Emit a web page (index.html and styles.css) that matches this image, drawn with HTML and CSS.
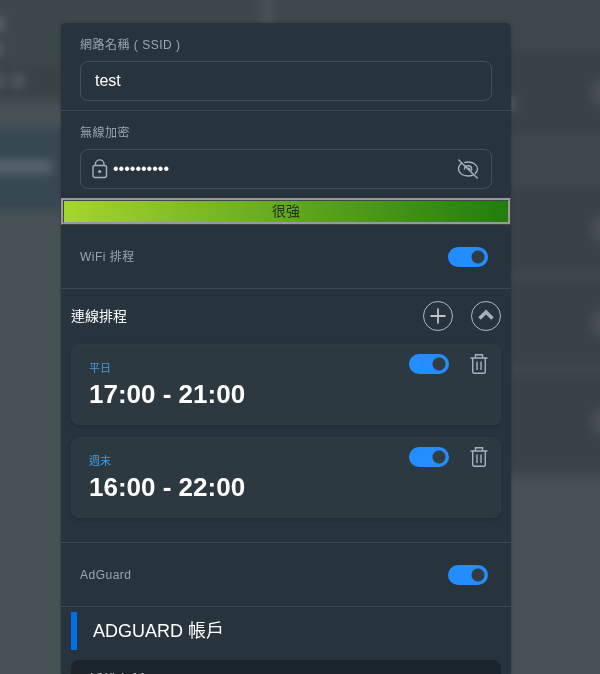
FILE: index.html
```
<!DOCTYPE html>
<html lang="zh-Hant">
<head>
<meta charset="utf-8">
<meta name="viewport" content="width=device-width, initial-scale=1">
<title>WiFi</title>
<link rel="stylesheet" href="styles.css">
</head>
<body>
<div class="backdrop" aria-hidden="true">
  <div class="side">
    <div class="tile"><i class="blob b1"></i><i class="blob b2"></i><div class="tile-foot"><i class="blob b3"></i><i class="blob b3"></i></div></div>
    <div class="tile tile-active"><i class="blob b4"></i></div>
  </div>
  <div class="list">
    <div class="line"><i class="blob name"></i><i class="blob knob"></i></div>
    <div class="line"></div>
    <div class="line"><i class="blob knob"></i></div>
    <div class="line"><i class="blob knob"></i></div>
    <div class="line"><i class="blob knob"></i></div>
  </div>
</div>

<main class="panel">
  <section class="field">
    <label class="label" for="ssid">網路名稱 ( SSID )</label>
    <div class="box"><input class="input" id="ssid" type="text" value="test"></div>
  </section>
  <section class="field last">
    <label class="label" for="pass">無線加密</label>
    <div class="box secret">
      <svg class="lock" width="16" height="20" viewBox="0 0 16 20"><rect x="1" y="6.500" width="13.500" height="12" rx="2"/><path d="M3.400 6.500V5.200a4.300 4.300 0 0 1 8.600 0v1.300"/><circle class="dot" cx="7.700" cy="12.500" r="1.600"/></svg>
      <input class="input" id="pass" type="password" value="password12">
      <button class="icon-btn" type="button" aria-label="顯示密碼">
        <svg width="22" height="22" viewBox="0 0 22 22"><path d="M5 5.200C2.800 6.500 1.500 8.600 1.500 11c0 4 4.300 7 9.500 7 2 0 3.900-.4 5.400-1.200M7.300 4.500A13 13 0 0 1 11 4c5.200 0 9.500 3 9.500 7 0 1.900-1 3.600-2.600 4.900"/><path d="M7.500 11.500C7.500 9.400 9 7.800 11 7.800s3.600 1.500 3.600 3.400q0 .8-.4 1.500M10.300 10.600q1-.8 1.900 0t.5 1.800"/><path d="M1.300 1.500 20.700 20.500"/></svg>
      </button>
    </div>
  </section>
  <div class="strength">很強</div>
  <section class="row">
    <label class="label" for="sched">WiFi 排程</label>
    <input class="switch" id="sched" type="checkbox" role="switch" checked>
  </section>
  <section class="schedule">
    <header class="head">
      <h2 class="subtitle">連線排程</h2>
      <button class="round" type="button" aria-label="新增"><svg class="plus" width="16" height="16" viewBox="0 0 16 16"><path d="M8 .5v15M.5 8h15"/></svg></button>
      <button class="round" type="button" aria-label="收合"><svg class="bold" width="16" height="16" viewBox="0 0 16 16"><path d="M1.500 10.500 8 4l6.500 6.500"/></svg></button>
    </header>
    <article class="card">
      <div class="when"><label class="day" for="d1">平日</label><strong class="time">17:00 - 21:00</strong></div>
      <input class="switch" id="d1" type="checkbox" role="switch" checked>
      <button class="icon-btn" type="button" aria-label="刪除"><svg width="18" height="20" viewBox="0 0 18 20"><path d="M.5 4h17M5.500 4V.7h7V4M2.700 4v13.500q0 1.800 1.800 1.800h9q1.800 0 1.800-1.800V4M7 7.500V16M11 7.500V16"/></svg></button>
    </article>
    <article class="card">
      <div class="when"><label class="day" for="d2">週末</label><strong class="time">16:00 - 22:00</strong></div>
      <input class="switch" id="d2" type="checkbox" role="switch" checked>
      <button class="icon-btn" type="button" aria-label="刪除"><svg width="18" height="20" viewBox="0 0 18 20"><path d="M.5 4h17M5.500 4V.7h7V4M2.700 4v13.500q0 1.800 1.800 1.800h9q1.800 0 1.800-1.800V4M7 7.500V16M11 7.500V16"/></svg></button>
    </article>
  </section>
  <section class="row">
    <label class="label" for="adg">AdGuard</label>
    <input class="switch" id="adg" type="checkbox" role="switch" checked>
  </section>
  <section class="account">
    <h2 class="title">ADGUARD 帳戶</h2>
    <div class="account-card">授權名稱</div>
  </section>
</main>
</body>
</html>
```
FILE: styles.css
```
* { box-sizing: border-box; }

body {
  margin: 0;
  height: 100vh;
  overflow: hidden;
  padding: 23px 89px 0 61px;
  background: #475257;
  color: #fff;
  font-family: "Liberation Sans", "Noto Sans CJK TC", sans-serif;
}

/* Blurred page behind the panel */
.backdrop {
  position: fixed;
  inset: -20px -20px 0;
  z-index: -1;
  display: grid;
  grid-template-columns: 280px 1fr;
  gap: 14px;
  align-items: start;
  filter: blur(5px);
}
.side { display: grid; gap: 26px; }
.tile { height: 122px; padding: 38px 0 0 12px; background: #3c474b; }
.tile-foot { display: flex; gap: 8px; margin: 10px 0 0 -12px; padding: 8px 12px; background: #394347; }
.tile-active { height: 82px; padding-top: 32px; background: #374852; }
.blob { display: block; border-radius: 4px; background: #59656b; }
.b1 { width: 13px; height: 12px; }
.b2 { width: 10px; height: 12px; margin-top: 14px; }
.b3 { width: 12px; height: 14px; background: #555b60; }
.b4 { width: 60px; height: 14px; background: #55646d; }
.list { background: #3d484c; padding-top: 70px; }
.line {
  display: flex;
  align-items: center;
  height: 94px;
  border-bottom: 9px solid #3e494d;
  background: #394347;
}
.line:nth-child(2) { height: 42px; background: #3d484c; }
.name { width: 18px; height: 12px; margin: 22px 0 0 222px; background: #53626a; }
.knob { width: 28px; height: 28px; margin-left: auto; border-radius: 50%; background: #4b5056; }
.line:last-child { height: 104px; }

.panel {
  height: 100%;
  overflow: hidden;
  border-radius: 5px 5px 0 0;
  background: #28343d;
  box-shadow: 0 0 3px #2c3840;
}

.field { padding: 14px 19px 9px; border-bottom: 1px solid #3d4952; }
.field.last { border-bottom: 0; }
.label {
  display: block;
  color: #94a8b2;
  font-size: 12px;
  line-height: 16px;
  letter-spacing: .5px;
}
.box {
  display: flex;
  align-items: center;
  height: 40px;
  margin-top: 8px;
  padding: 0 12px 0 14px;
  border: 1px solid #435060;
  border-radius: 8px;
}
.secret { padding-left: 11px; gap: 5px; }
.input {
  flex: 1;
  min-width: 0;
  padding: 0;
  border: 0;
  outline: 0;
  background: none;
  color: #fff;
  font: 16px "Liberation Sans", sans-serif;
}

svg { display: block; fill: none; stroke: #a5b1bf; stroke-width: 1.4; }
.dot { fill: #a5b1bf; stroke: none; }
.plus { stroke: #c0c3c6; stroke-width: 1.8; }
.bold { stroke-width: 3.5; }
.icon-btn { padding: 0; border: 0; background: none; }

.strength {
  height: 27px;
  border: 3px ridge #999;
  background: linear-gradient(90deg, #a6d52d, #63a820 50%, #217e0d);
  color: #20301c;
  font-size: 14px;
  line-height: 21px;
  text-align: center;
}

.row {
  display: flex;
  align-items: center;
  justify-content: space-between;
  height: 64px;
  padding: 0 23px 0 19px;
  border-bottom: 1px solid #3d4952;
}
.switch {
  appearance: none;
  width: 40px;
  height: 20px;
  margin: 0;
  border-radius: 10px;
  background: radial-gradient(circle at 30px 10px, #303d45 6px, #248dff 7px);
}

.schedule { padding: 12px 10px 24px; border-bottom: 1px solid #3d4952; }
.head { display: flex; align-items: center; gap: 18px; margin-bottom: 13px; }
.subtitle { flex: 1; margin: 0; font-size: 14px; font-weight: 400; line-height: 20px; }
.round {
  display: grid;
  place-items: center;
  width: 30px;
  height: 30px;
  padding: 0;
  border: 1px solid #b3b7ba;
  border-radius: 50%;
  background: none;
}
.card {
  display: flex;
  align-items: flex-start;
  height: 81px;
  padding: 9px 12px 0 17px;
  border: 1px solid #303c44;
  border-radius: 8px;
  background: #2d3941;
  box-shadow: 0 2px 3px #222d35;
}
.card + .card { margin-top: 12px; }
.card .icon-btn { margin-left: 21px; }
.when { flex: 1; padding-top: 6px; }
.day { display: block; color: #429bdc; font-size: 11px; line-height: 16px; }
.time { display: block; font-size: 26px; line-height: 36px; }

.account { padding: 5px 10px 0; }
.title {
  margin: 0 0 10px;
  padding-left: 16px;
  border-left: 6px solid #0070e8;
  font-size: 18px;
  font-weight: 400;
  line-height: 38px;
}
.account-card {
  height: 120px;
  padding: 10px 18px;
  border-radius: 8px;
  background: #1b232b;
  font-size: 14px;
  line-height: 20px;
}
```
